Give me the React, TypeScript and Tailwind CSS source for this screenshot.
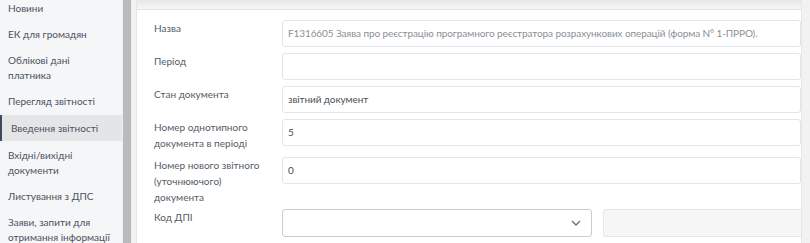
import React from "react";

const sideItems: { lines: string[]; active?: boolean }[] = [
  { lines: ["Новини"] },
  { lines: ["ЕК для громадян"] },
  { lines: ["Облікові дані", "платника"] },
  { lines: ["Перегляд звітності"] },
  { lines: ["Введення звітності"], active: true },
  { lines: ["Вхідні/вихідні", "документи"] },
  { lines: ["Листування з ДПС"] },
  { lines: ["Заяви, запити для", "отримання інформації"] },
];

function Input({ value, muted }: { value?: string; muted?: boolean }) {
  return (
    <div
      className={`h-[27px] flex-1 rounded-[3px] border border-[#e3e5e8] bg-white px-[5px] flex items-center text-[10px] tracking-[-0.1px] whitespace-nowrap overflow-hidden ${
        muted ? "text-[#8a9098]" : "text-[#4a4f57]"
      }`}
    >
      {value}
    </div>
  );
}

function Row({
  label,
  children,
  className = "",
}: {
  label: string[];
  children: React.ReactNode;
  className?: string;
}) {
  return (
    <div className={`flex items-start ${className}`}>
      <div className="w-[128px] shrink-0 text-[10px] leading-[16px] text-[#545b66]">
        {label.map((l, i) => (
          <div key={i}>{l}</div>
        ))}
      </div>
      {children}
    </div>
  );
}

export default function App() {
  return (
    <div
      className="w-[810px] h-[243px] overflow-hidden flex bg-white"
      style={{ fontFamily: "Lato, 'Open Sans', sans-serif" }}
    >
      {/* sidebar */}
      <div className="w-[122px] shrink-0 bg-[#f5f6f8] text-[10px] text-[#4a5260] overflow-hidden">
        <div className="-mt-[5px]">
          {sideItems.map((it, i) => (
            <div
              key={i}
              className={
                it.active
                  ? "h-[26px] flex items-center pl-[9px] bg-[#e4e5e7] border-l-[2px] border-[#3f4b5c] my-[1px]"
                  : "px-[8px] py-[5.5px] leading-[15px] whitespace-nowrap"
              }
            >
              {it.lines.map((l, j) => (
                <div key={j}>{l}</div>
              ))}
            </div>
          ))}
        </div>
      </div>
      {/* scrollbar */}
      <div className="w-[10px] shrink-0 bg-[#ededee] flex justify-center">
        <div className="w-[8px] bg-[#b9babb]" />
      </div>
      {/* main */}
      <div className="flex-1 flex flex-col bg-[#f2f2f3] pl-[4px]">
        <div className="flex-1 flex flex-col bg-white border-l border-[#e6e6e6] mr-[8px] border-r">
          <div className="h-[10px] bg-gradient-to-b from-[#e8e8e8] to-[#f6f6f6] border-b border-[#e4e4e4]" />
          <div className="pl-[17px] pt-[10px] flex flex-col">
            <Row label={["Назва"]}>
              <Input
                muted
                value="F1316605 Заява про реєстрацію програмного реєстратора розрахункових операцій (форма N° 1-ПРРО)."
              />
            </Row>
            <Row label={["Період"]} className="mt-[6px]">
              <Input />
            </Row>
            <Row label={["Стан документа"]} className="mt-[6px]">
              <Input value="звітний документ" />
            </Row>
            <Row label={["Номер однотипного", "документа в періоді"]} className="mt-[6px]">
              <Input value="5" />
            </Row>
            <Row
              label={["Номер нового звітного", "(уточнюючого)", "документа"]}
              className="mt-[6px]"
            >
              <Input value="0" />
            </Row>
            <Row label={["Код ДПІ"]} className="mt-[4px]">
              <div className="flex-1 flex gap-[11px]">
                <div className="w-[310px] h-[28px] rounded-[3px] border border-[#c9cdd3] bg-white flex items-center justify-end pr-[10px]">
                  <svg width="10" height="6" viewBox="0 0 10 6" fill="none">
                    <path d="M1 1l4 4 4-4" stroke="#6b7078" strokeWidth="1.4" />
                  </svg>
                </div>
                <div className="flex-1 h-[28px] rounded-l-[3px] border border-[#e6e7e9] border-r-0 bg-[#f6f6f7]" />
              </div>
            </Row>
          </div>
        </div>
      </div>
    </div>
  );
}
